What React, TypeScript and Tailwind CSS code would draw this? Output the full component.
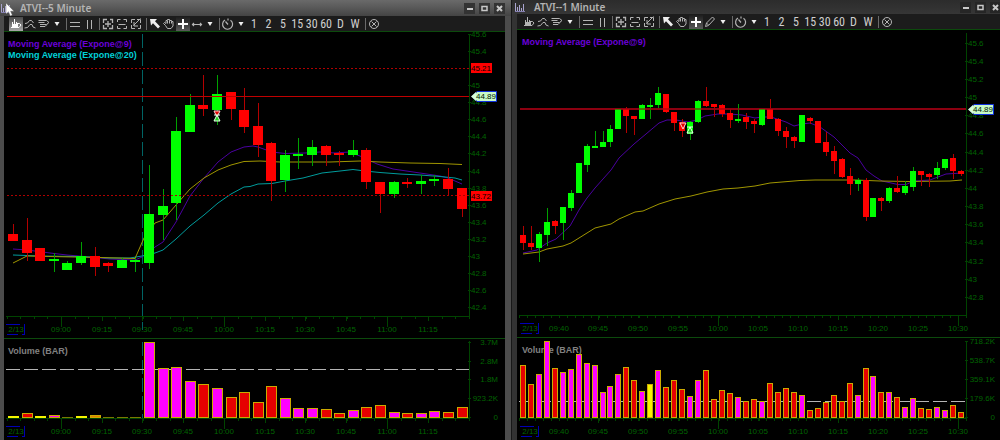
import React from "react";

type Candle = [high: number, low: number, top: number, bottom: number, dir: "G" | "R"];
type Bar = [top: number, kind: "M" | "R" | "Y" | "O" | "A"];
type Label = [text: string, pos: number];

const LEFT_CANDLES: Candle[] = [
  [224, 241, 234, 241, "R"], [218, 261, 240, 253, "R"], [248, 261, 248, 261, "R"], [253, 272, 259, 261, "G"],
  [261, 270, 263, 270, "G"], [242, 265, 256, 263, "G"], [247, 276, 256, 267, "R"], [262, 272, 263, 266, "R"],
  [258, 268, 260, 268, "G"], [258, 272, 260, 261, "G"], [165, 269, 214, 263, "G"], [189, 240, 206, 215, "G"],
  [117, 220, 131, 203, "G"], [94, 132, 105, 132, "G"], [75, 116, 105, 109, "R"], [75, 125, 94, 110, "G"],
  [92, 120, 92, 109, "R"], [88, 133, 110, 127, "R"], [103, 157, 126, 145, "R"], [142, 201, 143, 181, "R"],
  [150, 192, 155, 180, "G"], [138, 169, 154, 155, "G"], [140, 166, 147, 155, "G"], [145, 166, 146, 155, "R"],
  [151, 166, 153, 155, "R"], [140, 157, 150, 155, "G"], [148, 189, 150, 182, "R"], [182, 213, 182, 194, "R"],
  [181, 198, 182, 194, "G"], [178, 188, 182, 184, "R"], [175, 194, 181, 184, "G"], [175, 186, 179, 181, "G"],
  [168, 195, 179, 189, "R"], [188, 217, 188, 209, "R"],
];

const RIGHT_CANDLES: Candle[] = [
  [226, 250, 235, 243, "R"], [226, 250, 243, 247, "R"], [232, 262, 234, 248, "G"], [208, 246, 222, 235, "G"],
  [220, 234, 221, 226, "R"], [207, 240, 207, 223, "G"], [190, 211, 193, 208, "G"], [163, 193, 163, 193, "G"],
  [144, 172, 146, 165, "G"], [131, 148, 146, 148, "G"], [131, 147, 142, 147, "G"], [125, 147, 129, 142, "G"],
  [109, 129, 109, 129, "G"], [107, 133, 109, 116, "R"], [116, 135, 116, 119, "R"], [104, 119, 105, 119, "G"],
  [98, 119, 105, 106, "G"], [87, 108, 93, 105, "G"], [94, 113, 94, 112, "R"], [112, 131, 112, 123, "R"],
  [119, 137, 122, 131, "R"], [121, 140, 122, 134, "G"], [100, 123, 101, 122, "G"], [87, 107, 101, 106, "R"],
  [104, 117, 104, 107, "R"], [104, 117, 105, 114, "R"], [109, 128, 113, 120, "R"], [104, 123, 119, 120, "G"],
  [113, 129, 117, 122, "R"], [119, 133, 121, 124, "R"], [109, 126, 109, 125, "G"], [99, 119, 109, 119, "R"],
  [118, 136, 119, 131, "R"], [127, 148, 131, 137, "R"], [136, 148, 137, 141, "R"], [115, 142, 115, 142, "G"],
  [117, 124, 118, 121, "R"], [121, 143, 121, 143, "R"], [132, 156, 142, 152, "R"], [146, 174, 151, 161, "R"],
  [158, 178, 159, 177, "R"], [168, 195, 176, 184, "R"], [178, 191, 180, 184, "G"], [178, 221, 180, 217, "R"],
  [198, 217, 198, 217, "G"], [197, 211, 198, 201, "R"], [187, 203, 188, 201, "G"], [176, 193, 188, 192, "R"],
  [181, 195, 186, 193, "G"], [167, 191, 171, 187, "G"], [171, 186, 171, 175, "R"], [173, 187, 174, 177, "R"],
  [162, 179, 168, 175, "G"], [159, 170, 159, 168, "G"], [154, 179, 158, 171, "R"], [170, 176, 171, 174, "R"],
];

const LEFT_VOLUME: Bar[] = [
  [416, "Y"], [413, "R"], [416, "Y"], [415, "M"], [417, "O"], [416, "Y"], [415, "A"], [417, "O"], [417, "O"], [417, "O"],
  [342, "M"], [368, "M"], [367, "M"], [381, "M"], [384, "R"], [388, "M"], [397, "R"], [392, "R"], [402, "R"],
  [386, "R"], [398, "M"], [408, "M"], [408, "M"], [409, "R"], [413, "R"], [410, "M"], [407, "R"], [405, "R"],
  [412, "M"], [413, "R"], [413, "M"], [411, "M"], [412, "R"], [407, "R"],
];

const RIGHT_VOLUME: Bar[] = [
  [365, "R"], [384, "R"], [374, "M"], [341, "M"], [368, "R"], [372, "M"], [369, "M"], [354, "M"], [363, "M"], [365, "M"],
  [392, "M"], [386, "M"], [374, "M"], [367, "R"], [380, "R"], [391, "M"], [384, "Y"], [370, "M"], [387, "R"],
  [380, "R"], [389, "R"], [396, "M"], [380, "M"], [370, "R"], [399, "R"], [390, "R"], [393, "R"], [397, "M"],
  [401, "R"], [399, "R"], [401, "M"], [383, "R"], [392, "R"], [388, "R"], [392, "R"], [395, "M"], [410, "R"],
  [408, "R"], [402, "R"], [395, "R"], [401, "R"], [383, "R"], [395, "M"], [368, "R"], [376, "M"], [392, "R"],
  [392, "M"], [397, "R"], [407, "M"], [398, "M"], [408, "R"], [409, "R"], [407, "M"], [410, "M"], [405, "R"], [412, "R"],
];

const LEFT_PURPLE = "13,249 27,250 50,253 67,255 90,257 110,259 135,260 142,257 155,247 163,242 176,222 190,196 204,178 218,162 231,152 244,147 253,146 258,147 272,152 285,153.5 305,153 320,152 335,153 349,152 360,156 377,164 393,169 420,173 440,176 448,178 462,184";
const LEFT_CYAN = "13,255 40,256 80,256.5 110,258 130,258 142,256 155,253 163,250 176,239 190,226 204,215 218,203 231,194 244,187 250,186.5 258,184 272,183.5 285,181 303,178 322,173 340,171 353,169.5 365,171 380,172.5 400,174 420,175 440,176.5 455,178 462,180";
const LEFT_YELLOW = "13,263 27,256 50,256.5 100,257.5 135,258.5 144,238 155,223 163,220 176,205 190,189 204,178 218,170 231,165 244,161.5 260,161 280,162 300,162 330,162 360,161 380,162 410,163 440,163.5 462,164.5";
const RIGHT_PURPLE = "523,253 537,250 547,243 556,239 570,226 579,210 587,198 595,188 611,170 619,158 634,144 646,134 659,123 667,120 676,120 688,122 697,120 705,116 718,114 730,114 742,115 755,118 762,117 771,117 786,122 794,126 802,124 810,123 820,127 834,137 850,153 858,158 866,170 874,176 882,181 898,184.5 906,184.5 914,181 930,180 938,177 946,174 962,173";
const RIGHT_YELLOW = "523,254 539,252 547,249 563,246 571,243 579,238 595,228 611,224 619,219 635,212 643,211 659,204 675,199 691,196 707,192 723,189 738,188 755,186 770,183 800,180.5 815,180 855,180 880,181 910,181.5 950,181 962,180";

const LEFT_TIMES: Label[] = [
  ["09:00", 61], ["09:15", 102], ["09:30", 142], ["09:45", 183], ["10:00", 224],
  ["10:15", 265], ["10:30", 305], ["10:45", 346], ["11:00", 387], ["11:15", 428],
];
const RIGHT_TIMES: Label[] = [
  ["09:40", 559], ["09:45", 598], ["09:50", 638], ["09:55", 678], ["10:00", 718], ["10:05", 758],
  ["10:10", 798], ["10:15", 838], ["10:20", 878], ["10:25", 918], ["10:30", 958],
];

const priceLabels = (from: number, step: number, count: number): Label[] =>
  Array.from({ length: count }, (_, i) => [String(Number((45.6 - i * 0.2).toFixed(1))), from + i * step]);

const LEFT_PRICES = priceLabels(34, 17.07, 17).filter(([t]) => t !== "45.2");
const RIGHT_PRICES = priceLabels(42.5, 18.18, 15);

const FILL = { M: "#ff00ff", R: "#e60000", Y: "#f4f400", O: "#7a7a00", A: "#e08000" };
const FONT = "text-[8px] font-['Liberation_Sans',Arial,sans-serif]";
const LEGEND = "text-[9px] font-bold font-['Liberation_Sans',Arial,sans-serif]";

function Candles({ data, start, step, width }: { data: Candle[]; start: number; step: number; width: number }) {
  return (
    <g shapeRendering="crispEdges">
      {data.map(([high, low, top, bottom, dir], i) => {
        const cx = Math.floor(start + i * step);
        const up = dir === "G";
        return (
          <g key={i}>
            <rect x={cx} y={high} width={1} height={low - high} fill={up ? "#00a000" : "#b40000"} />
            <rect x={cx - Math.floor(width / 2)} y={top} width={width} height={Math.max(bottom - top, 2)} fill={up ? "#00ff00" : "#ff0000"} />
          </g>
        );
      })}
    </g>
  );
}

function Bars({ data, start, step, width, base }: { data: Bar[]; start: number; step: number; width: number; base: number }) {
  return (
    <g shapeRendering="crispEdges">
      {data.map(([top, kind], i) => {
        const x = Math.floor(start + i * step) - Math.floor(width / 2);
        const h = base - top;
        return (
          <g key={i}>
            <rect x={x} y={top} width={width} height={h} fill={h > 2 ? "#ccaa00" : FILL[kind]} />
            {h > 2 && <rect x={x + 1} y={top + 1} width={width - 2} height={h - 2} fill={FILL[kind]} />}
          </g>
        );
      })}
    </g>
  );
}

function TimeAxis(p: { x1: number; x2: number; y: number; ticks: Label[]; minor: number; major: string[]; mid: string[]; dateX: number }) {
  const first = p.ticks[0][1];
  const minors: number[] = [];
  for (let x = first - Math.floor((first - p.x1) / p.minor) * p.minor; x < p.x2; x += p.minor) minors.push(Math.round(x));
  return (
    <g>
      <g shapeRendering="crispEdges" fill="#004400">
        <rect x={p.x1} y={p.y} width={p.x2 - p.x1} height={1} />
        {minors.map((x) => <rect key={x} x={x} y={p.y} width={1} height={3} />)}
        {p.ticks.map(([t, x]) => (
          <rect key={t} x={x} y={p.y} width={1} height={p.major.includes(t) ? 11 : p.mid.includes(t) ? 5 : 3} />
        ))}
      </g>
      <g className={FONT} fill="#006400" textAnchor="middle">
        {p.ticks.map(([t, x]) => <text key={t} x={x} y={p.y + 16}>{t}</text>)}
        <text x={p.dateX + 8} y={p.y + 16}>2/13</text>
      </g>
      <path
        d={`M${p.dateX - 2} ${p.y + 8.5}h14M${p.dateX + 16.5} ${p.y + 8}v10.5h-3M${p.dateX - 1} ${p.y + 18.5}h11`}
        fill="none"
        stroke="#0000b4"
        shapeRendering="crispEdges"
      />
    </g>
  );
}

function PriceAxis({ x, y1, y2, labels }: { x: number; y1: number; y2: number; labels: Label[] }) {
  return (
    <g>
      <g shapeRendering="crispEdges" fill="#004400">
        <rect x={x} y={y1} width={1} height={y2 - y1} />
        {labels.map(([t, y]) => <rect key={t} x={x - 1} y={Math.round(y)} width={3} height={1} />)}
      </g>
      <g className={FONT} fill="#006400">
        {labels.map(([t, y]) => <text key={t} x={x + 2} y={Math.round(y + 3)}>{t}</text>)}
      </g>
    </g>
  );
}

function VolumeAxis({ x, right, y1, y2, labels }: { x: number; right: number; y1: number; y2: number; labels: Label[] }) {
  return (
    <g>
      <g shapeRendering="crispEdges" fill="#004400">
        <rect x={x} y={y1} width={1} height={y2 - y1} />
        {labels.map(([t, y]) => <rect key={t} x={x - 1} y={y} width={3} height={1} />)}
      </g>
      <g className={FONT} fill="#006400" textAnchor="end">
        {labels.map(([t, y]) => <text key={t} x={right} y={y + 3}>{t}</text>)}
      </g>
    </g>
  );
}

function LevelTag({ x, y, text }: { x: number; y: number; text: string }) {
  return (
    <g>
      <rect x={x} y={y - 5} width={21} height={10} fill="#ff0000" />
      <text className={FONT} x={x} y={y + 3} fill="#000000">{text}</text>
    </g>
  );
}

function PriceTag({ x, y }: { x: number; y: number }) {
  return (
    <g>
      <path d={`M${x + 1} ${y + 0.5}l5 -5h19.500v10h-19.500z`} fill="#c8fac8" stroke="#1030e0" />
      <path d={`M${x} ${y + 0.5}l5 -4.500v9z`} fill="#d8ffd8" />
      <text className={FONT} x={x + 5} y={y + 3} fill="#001800">44.89</text>
    </g>
  );
}

function DownMark({ x, y }: { x: number; y: number }) {
  return <path d={`M${x - 3} ${y}h6l-3 6z`} fill="#e00000" stroke="#ffd8d8" strokeWidth="1" />;
}

function UpMark({ x, y }: { x: number; y: number }) {
  return <path d={`M${x - 3} ${y + 6}h6l-3 -6zM${x - 3} ${y}h6`} fill="#20d020" stroke="#e8ffe8" strokeWidth="1" />;
}

function Line({ points, color }: { points: string; color: string }) {
  return <polyline points={points} fill="none" stroke={color} strokeWidth="1" />;
}

type IconName = "chart" | "study" | "lines" | "rows" | "cols" | "expand" | "shrink" | "swap" | "pointer" | "hand" | "cross" | "arrows" | "pencil" | "clock" | "close" | "caret";

const ICONS: Record<IconName, React.ReactNode> = {
  chart: (
    <g>
      <path d="M3.5 5v6M5.5 2v9M7.5 5v6M2 10.500h8M8 6.500h2.500L12 8l-2 2.500" />
      <path d="M3 7h6v3H3z" fill="currentColor" stroke="none" />
    </g>
  ),
  study: <path d="M2 6.500L4.500 6l2-2.500h2L10.500 6M1.500 11l3-.5 2.500-3h2l1 2.500 2.500 1" />,
  lines: <path d="M1.500 3.500h8l2.500 2-2.500 2H3M1.500 5.500h6M3 9.500h5l2-2" />,
  rows: <path d="M2 5.500h10M2 9.500h10" />,
  cols: <path d="M5.500 3v9M9.500 3v9" />,
  expand: <path d="M6 2.500H2.500V6M9 2.500h2.500V6M2.500 8v3.500H6M11.500 8v3.500H8M4 7h6M7 4v6" strokeWidth="1.300" />,
  shrink: <path d="M5.500 2.500h-3V5M8.500 2.500h3V5M2.500 9v2.500h3M11.500 9v2.500h-3M3.500 7.500h7" />,
  swap: <path d="M6 2.500H2.500V6M2.500 8v3.500H6M9 11.500h2.500V8M11.500 1.500l-7 7M5 5v4h4M8 2.500h3.500V6" />,
  pointer: <path d="M2 2h7L7 4.200l5 5.300-2 2-5-5.300L3 8.500z" fill="currentColor" stroke="none" />,
  hand: <path d="M3.500 8.500l-2-2 1-1L4 6.500V3.500h1.500V2.500h2v1h2v1h1.500V9l-2 2.500H5.500zM5.500 4v2.500M7.500 3.500v3M9.500 4.500v2" />,
  cross: <path d="M7 2v10M2 7h10" strokeWidth="2" />,
  arrows: <path d="M2 7.500h10M4 6L2.500 7.500 4 9M10 6l1.500 1.500L10 9" strokeWidth="1.200" />,
  pencil: <path d="M2.500 11.500l1-3.500 6-6 2 2-6 6.500zM3.500 8l2 2" />,
  clock: <path d="M4 3a5 5 0 1 0 5.500.2M7 7.500L4.500 4.500M7 1.500v2" strokeWidth="1.200" />,
  close: (
    <g>
      <circle cx="7" cy="7" r="4.500" />
      <path d="M4.500 4.500l5 5M9.500 4.500l-5 5" />
    </g>
  ),
  caret: <path d="M4.500 5h5L7 9z" fill="currentColor" stroke="none" />,
};

function Tool({ name, label, active }: { name: IconName; label: string; active?: "light" | "soft" }) {
  const tone =
    active === "light" ? "bg-linear-to-b from-[#4a4a4a] to-[#a8a8a8] text-white"
    : active === "soft" ? "bg-linear-to-b from-[#1e1e1e] to-[#5a5a5a] text-white"
    : name === "pointer" || name === "caret" ? "text-[#eeeeee]" : "text-[#b4b4b4]";
  return (
    <button type="button" aria-label={label} className={`flex h-[14px] items-center justify-center ${name === "caret" ? "w-3" : "w-3.5"} ${tone}`}>
      <svg viewBox="0 0 14 14" className="size-3.5 shrink-0" fill="none" stroke="currentColor" aria-hidden="true">
        {ICONS[name]}
      </svg>
    </button>
  );
}

function Separator() {
  return <span className="mr-px ml-[3px] h-3 w-px shrink-0 bg-[#6a6a6a]" />;
}

const INTERVALS = ["1", "2", "5", "15", "30", "60", "D", "W"];

function Toolbar({ lit, draw }: { lit?: boolean; draw: "arrows" | "pencil" }) {
  return (
    <div role="toolbar" className="flex h-4 items-center overflow-hidden border-b border-[#0c4a0c] bg-[#1c1c1c] pl-[5px]">
      <Tool name="chart" label="Chart type" active={lit ? "light" : undefined} />
      <Tool name="study" label="Studies" />
      <Tool name="lines" label="Templates" />
      <Tool name="caret" label="More templates" />
      <Separator />
      <Tool name="rows" label="Split rows" />
      <Tool name="cols" label="Split columns" />
      <Separator />
      <Tool name="expand" label="Zoom in" />
      <Tool name="shrink" label="Zoom out" />
      <Tool name="swap" label="Fit" />
      <Separator />
      <Tool name="pointer" label="Pointer" />
      <Tool name="hand" label="Pan" />
      <Tool name="cross" label="Crosshair" active="soft" />
      <Tool name={draw} label="Draw" />
      <Tool name="caret" label="More drawing tools" />
      <Separator />
      <Tool name="clock" label="Interval" />
      <Tool name="caret" label="More intervals" />
      <div className="flex w-[115px] justify-between">
        {INTERVALS.map((t) => (
          <button key={t} type="button" className="flex h-[14px] w-3.5 items-center justify-center font-['Liberation_Sans_Narrow','Roboto_Condensed','Liberation_Sans',sans-serif] text-[12px] leading-none text-[#d0d0d0]">
            {t}
          </button>
        ))}
      </div>
      <Separator />
      <Tool name="close" label="Remove all" />
    </div>
  );
}

function TitleIcon() {
  return (
    <svg viewBox="0 0 12 12" className="size-3 shrink-0" aria-hidden="true" shapeRendering="crispEdges">
      <path d="M1.500 2v9M3.500 6v5M5.500 4v7M7.500 7v4M9.500 3v8" stroke="#a9a4cf" fill="none" />
      <path d="M1 10.500h10" stroke="#8580b0" />
    </svg>
  );
}

function WindowButtons({ dark }: { dark?: boolean }) {
  const cls = `flex size-[11px] items-center justify-center text-[#c8c8c8] ${dark ? "bg-[#262626]" : "bg-[#333333]"}`;
  return (
    <div className={`ml-auto flex shrink-0 gap-1 ${dark ? "-mr-px" : "pr-1.5"}`}>
      <button type="button" aria-label="Minimize" className={cls}>
        <svg viewBox="0 0 11 11" className="size-[11px]" stroke="currentColor" strokeWidth="2"><path d="M3 6h6" /></svg>
      </button>
      <button type="button" aria-label="Maximize" className={cls}>
        <svg viewBox="0 0 11 11" className="size-[11px]" fill="none" stroke="currentColor" strokeWidth="1.500"><path d="M3 3.500h5v4H3z" /></svg>
      </button>
      <button type="button" aria-label="Close" className={cls}>
        <svg viewBox="0 0 11 11" className="size-[11px]" stroke="currentColor" strokeWidth="2"><path d="M3 3l5 5M8 3L3 8" /></svg>
      </button>
    </div>
  );
}

const TITLE = "text-[10px] leading-none font-semibold text-[#b4b4b4] font-['Noto_Sans',sans-serif]";

function FiveMinuteWindow() {
  return (
    <section className="flex min-w-0 flex-col bg-[#4c4c4c]">
      <header className="relative flex h-4 items-center gap-2 bg-linear-to-b from-[#6a6a6a] via-[#585858] to-[#444444]">
        <TitleIcon />
        <h1 className={TITLE}>ATVI--5 Minute</h1>
        <WindowButtons />
        <svg viewBox="0 0 10 14" className="absolute top-[3px] left-1.5 h-3.5 w-2.5" aria-hidden="true">
          <path d="M0 0v11l2.500-2.200L4.300 13l2-.9L4.600 8.200H8z" fill="#ffffff" stroke="#555555" strokeWidth=".4" />
        </svg>
      </header>
      <div className="mr-1.5 ml-1 bg-black">
        <Toolbar lit draw="arrows" />
        <svg viewBox="4 32 501 306" className="block h-auto w-full" role="img" aria-label="ATVI five minute price chart">
          <path d="M142.500 34v296" stroke="#006464" strokeDasharray="14 4" shapeRendering="crispEdges" />
          <Line points={LEFT_PURPLE} color="#4a00a0" />
          <Line points={LEFT_CYAN} color="#009c9c" />
          <Line points={LEFT_YELLOW} color="#a09600" />
          <Candles data={LEFT_CANDLES} start={13.4} step={13.6} width={10} />
          <path d="M7 68.500h463M7 195.500h463" stroke="#b00000" strokeDasharray="2 2" shapeRendering="crispEdges" />
          <path d="M7 96.500h463" stroke="#c00000" shapeRendering="crispEdges" />
          <DownMark x={217} y={111} />
          <UpMark x={217} y={115} />
          <PriceAxis x={469} y1={35} y2={317} labels={LEFT_PRICES} />
          <LevelTag x={471} y={68} text="45.21" />
          <LevelTag x={471} y={196} text="43.72" />
          <PriceTag x={471} y={96} />
          <TimeAxis x1={6} x2={470} y={316} ticks={LEFT_TIMES} minor={13.6} major={["09:00", "10:00", "11:00"]} mid={["09:15", "09:30", "09:45", "10:15", "10:30", "10:45", "11:15"]} dateX={8} />
          <g className={LEGEND}>
            <text x="8" y="47" fill="#6a00d8">Moving Average (Expone@9)</text>
            <text x="8" y="58" fill="#00d0d8">Moving Average (Expone@20)</text>
          </g>
        </svg>
        <svg viewBox="4 338 501 102" className="block h-auto w-full" role="img" aria-label="ATVI five minute volume">
          <rect x="4" y="338" width="501" height="1" fill="#0c4a0c" />
          <text x="8" y="354" fill="#808080" className={LEGEND}>Volume (BAR)</text>
          <path d="M142.500 342v76" stroke="#006464" strokeDasharray="14 4" shapeRendering="crispEdges" />
          <path d="M6 369.500h464" stroke="#b4b4b4" strokeDasharray="14 4" shapeRendering="crispEdges" />
          <Bars data={LEFT_VOLUME} start={13.4} step={13.6} width={11} base={418} />
          <VolumeAxis x={469} right={498} y1={341} y2={419} labels={[["3.7M", 342], ["2.8M", 361], ["1.8M", 379], ["923.2K", 398], ["0", 417]]} />
          <TimeAxis x1={6} x2={470} y={418} ticks={LEFT_TIMES} minor={13.6} major={["09:00", "10:00", "11:00"]} mid={["09:15", "09:30", "09:45", "10:15", "10:30", "10:45", "11:15"]} dateX={8} />
        </svg>
      </div>
    </section>
  );
}

function OneMinuteWindow() {
  return (
    <section className="flex min-w-0 flex-col border-l border-[#181818] bg-[#333333]">
      <header className="flex h-3.5 items-center gap-2 bg-linear-to-b from-[#2c2c2c] to-[#363636] pl-0.5">
        <TitleIcon />
        <h1 className={TITLE}>ATVI--1 Minute</h1>
        <WindowButtons dark />
      </header>
      <div className="ml-[5px] bg-black">
        <Toolbar draw="pencil" />
        <svg viewBox="517 30 483 307" className="block h-auto w-full" role="img" aria-label="ATVI one minute price chart">
          <Line points={RIGHT_PURPLE} color="#4a00a0" />
          <Line points={RIGHT_YELLOW} color="#a09600" />
          <rect x="520" y="108" width="447" height="2" fill="#8c0010" />
          <Candles data={RIGHT_CANDLES} start={523.3} step={7.97} width={6} />
          <rect x="520" y="108" width="447" height="2" fill="#8c0010" opacity=".5" />
          <DownMark x={683} y={123} />
          <UpMark x={690} y={127} />
          <PriceAxis x={966} y1={33} y2={316} labels={RIGHT_PRICES} />
          <PriceTag x={968} y={109} />
          <TimeAxis x1={519} x2={967} y={315} ticks={RIGHT_TIMES} minor={7.98} major={["10:00", "10:30"]} mid={["09:45", "10:15"]} dateX={522} />
          <text x="522" y="45" fill="#6a00d8" className={LEGEND}>Moving Average (Expone@9)</text>
        </svg>
        <svg viewBox="517 337 483 103" className="block h-auto w-full" role="img" aria-label="ATVI one minute volume">
          <rect x="517" y="337" width="483" height="1" fill="#0c4a0c" />
          <text x="522" y="353" fill="#808080" className={LEGEND}>Volume (BAR)</text>
          <path d="M519 401.500h447" stroke="#b4b4b4" strokeDasharray="14 4" shapeRendering="crispEdges" />
          <Bars data={RIGHT_VOLUME} start={523.3} step={7.97} width={6} base={418} />
          <VolumeAxis x={966} right={995} y1={341} y2={419} labels={[["718.2K", 341], ["538.7K", 360], ["359.1K", 379], ["179.6K", 398], ["0", 417]]} />
          <TimeAxis x1={519} x2={967} y={418} ticks={RIGHT_TIMES} minor={7.98} major={["10:00", "10:30"]} mid={["09:45", "10:15"]} dateX={522} />
        </svg>
      </div>
    </section>
  );
}

export default function App() {
  return (
    <main className="grid min-h-screen grid-cols-[511fr_489fr] bg-[#333333]">
      <FiveMinuteWindow />
      <OneMinuteWindow />
    </main>
  );
}
